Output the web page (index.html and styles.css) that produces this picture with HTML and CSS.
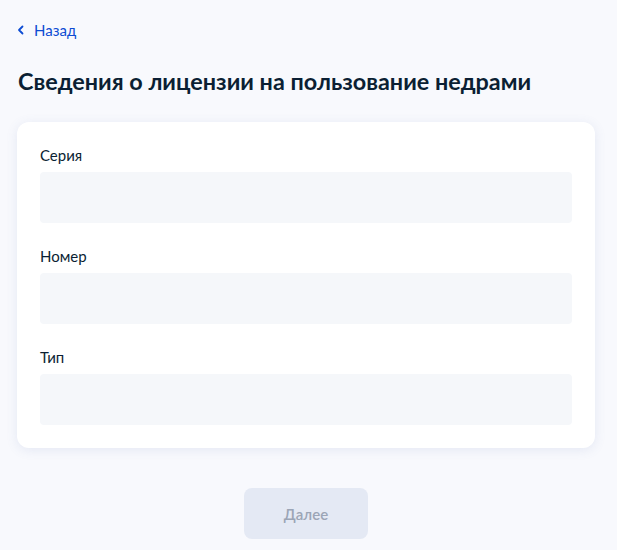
FILE: index.html
```html
<!DOCTYPE html>
<html lang="ru">
<head>
<meta charset="utf-8">
<link rel="stylesheet" href="styles.css">
</head>
<body>
<div class="page">
  <a class="back" href="#">
    <svg class="back-icon" width="8" height="10" viewBox="0 0 8 10"><path d="M5.5 1.5 L2 5 L5.5 8.5" fill="none" stroke="#0d4cd3" stroke-width="1.8" stroke-linecap="round" stroke-linejoin="round"/></svg>
    <span>Назад</span>
  </a>
  <h1 class="title">Сведения о лицензии на пользование недрами</h1>
  <div class="card">
    <div class="field">
      <div class="label">Серия</div>
      <div class="input"></div>
    </div>
    <div class="field">
      <div class="label">Номер</div>
      <div class="input"></div>
    </div>
    <div class="field">
      <div class="label">Тип</div>
      <div class="input"></div>
    </div>
  </div>
  <div class="actions">
    <button class="btn" disabled>Далее</button>
  </div>
</div>
</body>
</html>
```
FILE: styles.css
```css
html, body {
  margin: 0;
  padding: 0;
}
body {
  background: #f8f9fd;
  font-family: Lato, "Noto Sans", sans-serif;
  color: #0b1f33;
  width: 617px;
  height: 550px;
  overflow: hidden;
}
.page {
  padding: 20px 22px 0 17px;
}
.back {
  display: flex;
  align-items: center;
  gap: 9px;
  height: 20px;
  color: #0d4cd3;
  text-decoration: none;
  font-size: 15px;
}
.back-icon {
  display: block;
}
.title {
  margin: 26px 0 0 1px;
  font-size: 23.4px;
  line-height: 30px;
  font-weight: 700;
  color: #0b1f33;
}
.card {
  margin-top: 26px;
  background: #fff;
  border-radius: 12px;
  box-shadow: 0 2px 12px rgba(86, 110, 170, 0.12);
  padding: 23px;
  display: flex;
  flex-direction: column;
  gap: 23px;
}
.field {
  display: flex;
  flex-direction: column;
  gap: 7px;
}
.label {
  font-size: 15px;
  line-height: 20px;
  color: #0b1f33;
}
.input {
  height: 51px;
  background: #f5f7fa;
  border-radius: 4px;
}
.actions {
  display: flex;
  justify-content: center;
  margin-top: 40px;
}
.btn {
  width: 124px;
  height: 51px;
  border: none;
  border-radius: 8px;
  background: #e4e9f4;
  color: #9ba5b6;
  font-family: Lato, "Noto Sans", sans-serif;
  font-size: 15px;
  font-weight: 600;
}
```
